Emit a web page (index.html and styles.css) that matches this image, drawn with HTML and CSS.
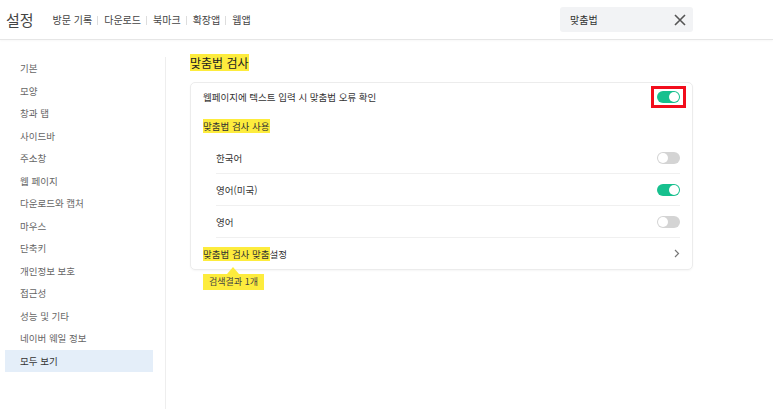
FILE: index.html
```html
<!DOCTYPE html>
<html lang="ko">
<head>
    <meta charset="UTF-8">
    <title>설정</title>
    <link rel="stylesheet" href="styles.css">
</head>
<body>
    <!-- 상단 헤더 -->
    <div class="header">
        <div class="title">설정</div>
        <ul class="nav">
            <li>방문 기록</li>
            <li>다운로드</li>
            <li>북마크</li>
            <li>확장앱</li>
            <li>웹앱</li>
        </ul>
        <div class="search">
            <span>맞춤법</span>
            <svg class="clear" width="12" height="12" viewBox="0 0 12 12">
                <path d="M1 1L11 11M11 1L1 11" stroke="#555" stroke-width="1.6" fill="none"/>
            </svg>
        </div>
    </div>

    <div class="wrap">
        <!-- 왼쪽 메뉴 -->
        <ul class="side">
            <li>기본</li>
            <li>모양</li>
            <li>창과 탭</li>
            <li>사이드바</li>
            <li>주소창</li>
            <li>웹 페이지</li>
            <li>다운로드와 캡처</li>
            <li>마우스</li>
            <li>단축키</li>
            <li>개인정보 보호</li>
            <li>접근성</li>
            <li>성능 및 기타</li>
            <li>네이버 웨일 정보</li>
            <li class="on">모두 보기</li>
        </ul>

        <div class="main">
            <h2 class="sec-title"><mark>맞춤법 검사</mark></h2>
            <div class="card">
                <div class="row first">
                    <span>웹페이지에 텍스트 입력 시 맞춤법 오류 확인</span>
                    <span class="mark-box">
                        <span class="toggle checked"></span>
                    </span>
                </div>
                <div class="row head"><mark>맞춤법 검사 사용</mark></div>
                <div class="sub">
                    <div class="row sub-row">
                        <span>한국어</span>
                        <span class="toggle"></span>
                    </div>
                    <div class="row sub-row">
                        <span>영어(미국)</span>
                        <span class="toggle checked"></span>
                    </div>
                    <div class="row sub-row">
                        <span>영어</span>
                        <span class="toggle"></span>
                    </div>
                </div>
                <div class="row last">
                    <span><mark>맞춤법 검사 맞춤</mark>설정</span>
                    <svg width="6" height="9" viewBox="0 0 6 9">
                        <path d="M1 1L4.5 4.5L1 8" stroke="#777" stroke-width="1.2" fill="none"/>
                    </svg>
                    <div class="tip">검색결과 1개</div>
                </div>
            </div>
        </div>
    </div>
</body>
</html>
```

FILE: styles.css
```css
*{
    margin: 0;
    padding: 0;
}

body{
    font-family: "Noto Sans CJK KR", "Noto Sans", sans-serif;
    color: #333;
    background-color: #fff;
}

ul{
    list-style: none;
}

mark{
    background-color: #fdec3d;
    color: inherit;
}

/* 헤더 */
.header{
    height: 39px;
    border-bottom: 1px solid #e6e6e6;
    display: flex;
    align-items: center;
    padding-left: 6px;
    box-shadow: 0 1px 2px rgba(0,0,0,0.03);
}

.title{
    font-size: 15px;
    color: #444;
    margin-right: 19px;
}

.nav{
    display: flex;
    font-size: 10px;
    color: #444;
}

.nav li + li::before{
    content: "";
    display: inline-block;
    width: 1px;
    height: 9px;
    background-color: #ddd;
    margin: 0 6px 0 5px;
    vertical-align: -1px;
}

.search{
    margin-left: auto;
    margin-right: 80px;
    width: 133px;
    height: 25px;
    box-sizing: border-box;
    background-color: #f2f3f5;
    border-radius: 3px;
    display: flex;
    align-items: center;
    justify-content: space-between;
    padding: 0 7px 0 10px;
    font-size: 10px;
    color: #333;
}

/* 본문 */
.wrap{
    display: flex;
}

.side{
    width: 165px;
    flex-shrink: 0;
    margin-top: 17px;
    height: 352px;
    border-right: 1px solid #eee;
    font-size: 9.5px;
    color: #666;
}

.side li{
    height: 22.5px;
    line-height: 22.5px;
    padding-left: 15px;
    margin: 0 12px 0 5px;
}

.side li.on{
    background-color: #e4eef9;
    color: #333;
}

.main{
    padding-left: 24px;
    width: 503px;
}

.sec-title{
    font-size: 12px;
    font-weight: normal;
    color: #222;
    height: 20px;
    line-height: 20px;
    margin-top: 13px;
    margin-bottom: 9px;
}

.card{
    border: 1px solid #ececec;
    border-radius: 5px;
    padding: 0 12px;
    box-shadow: 0 1px 2px rgba(0,0,0,0.04);
}

.row{
    display: flex;
    align-items: center;
    justify-content: space-between;
    font-size: 9.5px;
    color: #333;
    position: relative;
}

.row.first{
    height: 27px;
}

.row.head{
    height: 32px;
}

.sub{
    padding-left: 13px;
}

.sub-row{
    height: 31px;
    border-bottom: 1px solid #f0f0f0;
}

.row.last{
    height: 31px;
}

/* 토글 */
.toggle{
    display: block;
    width: 23px;
    height: 12px;
    border-radius: 6px;
    background-color: #d4d4d4;
    position: relative;
}

.toggle::after{
    content: "";
    position: absolute;
    top: 1px;
    left: 1px;
    width: 10px;
    height: 10px;
    border-radius: 50%;
    background-color: #fff;
}

.toggle.checked{
    background-color: #17c08e;
}

.toggle.checked::after{
    left: 12px;
}

/* 빨간 표시 */
.mark-box{
    position: relative;
}

.mark-box::after{
    content: "";
    position: absolute;
    top: -5px;
    bottom: -5px;
    left: -6px;
    right: -6px;
    border: 3px solid #f20d1c;
}

/* 검색결과 말풍선 */
.tip{
    position: absolute;
    left: 0;
    top: 36px;
    background-color: #fdec3d;
    font-size: 9px;
    color: #444;
    padding: 0 6px;
    height: 16px;
    line-height: 16px;
}

.tip::before{
    content: "";
    position: absolute;
    top: -7px;
    left: 24px;
    border-left: 6px solid transparent;
    border-right: 6px solid transparent;
    border-bottom: 7px solid #fdec3d;
}
```
